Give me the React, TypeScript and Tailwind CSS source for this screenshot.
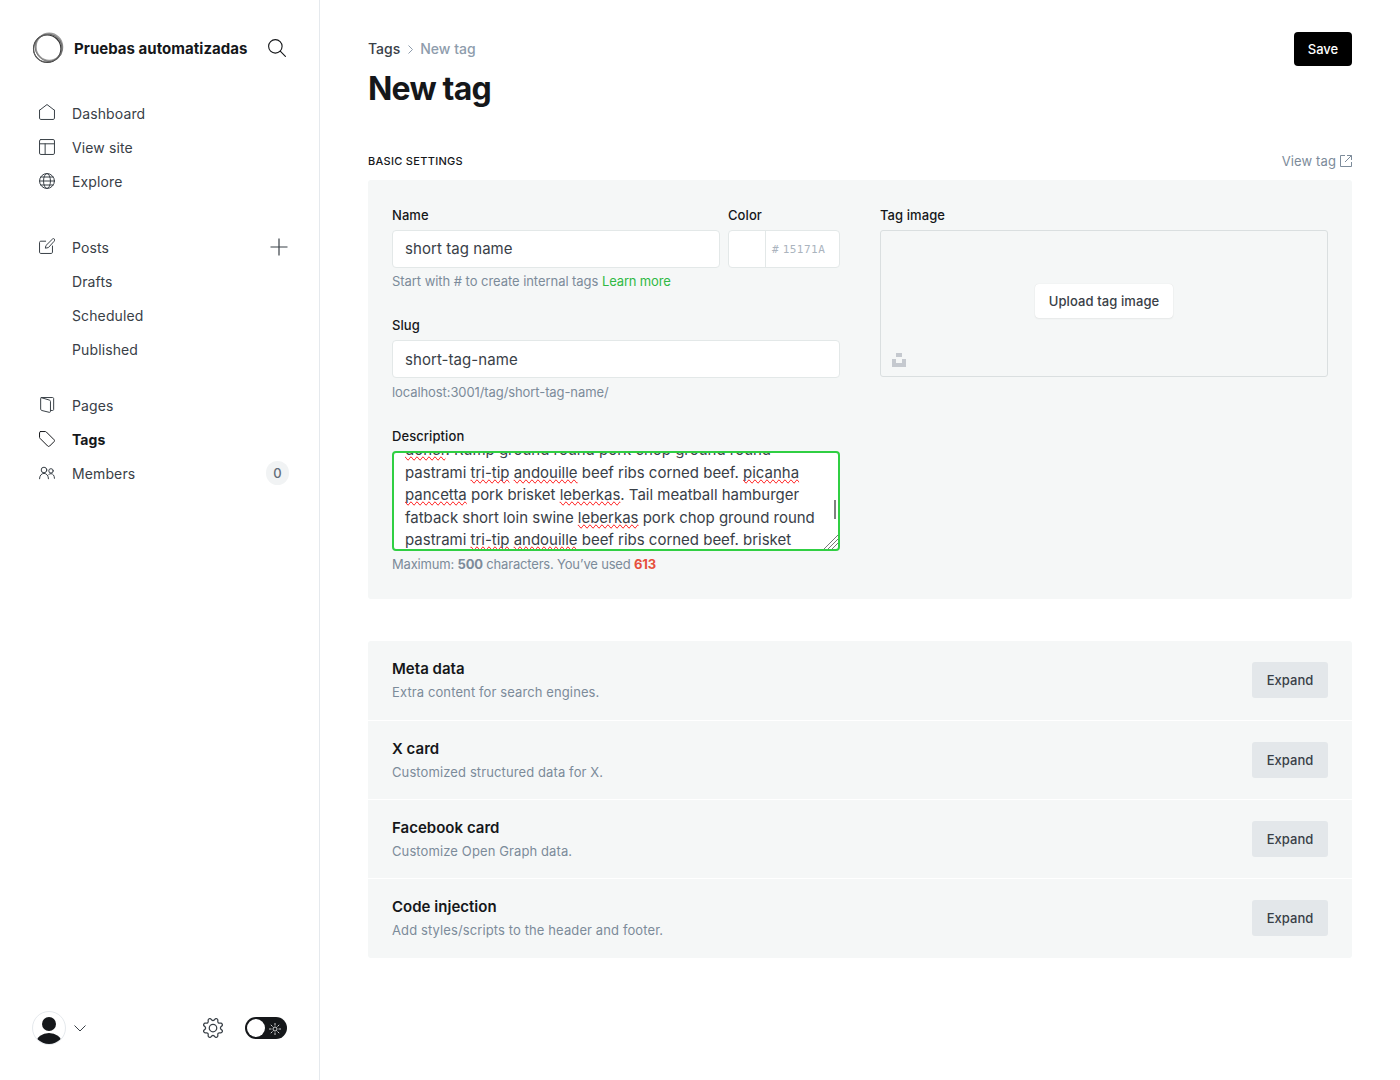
import type { ReactNode } from 'react';

type IconProps = { children: ReactNode; className?: string };

function Icon({ children, className = '' }: IconProps) {
  return (
    <svg
      viewBox="0 0 24 24"
      fill="none"
      stroke="currentColor"
      strokeWidth="1.5"
      strokeLinecap="round"
      strokeLinejoin="round"
      className={`block shrink-0 ${className}`}
    >
      {children}
    </svg>
  );
}

const icons = {
  home: <path d="M.8 9.4v11.9c0 1.1.8 1.9 1.9 1.9h18.6c1.1 0 1.9-.8 1.9-1.9V9.4M.8 9.4 12 .8l11.2 8.6" />,
  site: (
    <>
      <rect x=".8" y=".8" width="22.4" height="22.4" rx="2" />
      <path d="M.8 7.2h22.4M9.2 7.2v16" />
    </>
  ),
  globe: (
    <>
      <circle cx="12" cy="12" r="11.2" />
      <ellipse cx="12" cy="12" rx="5.2" ry="11.2" />
      <path d="M.8 12h22.4M2.8 6h18.4M2.8 18h18.4" />
    </>
  ),
  posts: (
    <>
      <path d="M20.2 12v9.4c0 1-.8 1.8-1.8 1.8H2.6c-1 0-1.8-.8-1.8-1.8V6.6c0-1 .8-1.8 1.8-1.8H10" />
      <path d="m13.500 14.500-4 .8.9-4L20.200 1.600a2 2 0 0 1 2.900 2.900z" />
    </>
  ),
  pages: (
    <>
      <path d="M4 .8h16.500c.8 0 1.500.7 1.500 1.500v16.400c0 .8-.7 1.500-1.500 1.500h-3" />
      <path d="M3.200.9 15.500 4.600c1 .3 1.700 1 1.700 2v15c0 1-.8 1.600-1.700 1.400L4 20.200c-.9-.3-1.500-1-1.500-2V2C2.500 1.300 3 .8 4 .8" />
    </>
  ),
  tag: <path d="M2.300.8h7.200c.5 0 1 .2 1.400.6l11.700 11.700c.8.8.8 2 0 2.800l-6.700 6.700c-.8.8-2 .8-2.800 0L1.400 10.900c-.4-.4-.6-.9-.6-1.400V2.300C.8 1.500 1.500.8 2.300.8z" />,
  members: (
    <>
      <circle cx="7.500" cy="7.500" r="4.200" />
      <path d="M.8 20.600c0-4.500 2.800-8 6.700-8s6.700 3.500 6.700 8" />
      <circle cx="18" cy="8.800" r="3.300" />
      <path d="M14.600 14.300c1-.9 2.100-1.300 3.400-1.300 3 0 5.200 2.900 5.200 7" />
    </>
  ),
};

type NavProps = { label: string; icon?: ReactNode; active?: boolean; raised?: boolean; trailing?: ReactNode };

function NavItem({ label, icon, active, raised, trailing }: NavProps) {
  return (
    <a
      className={`flex h-[34px] items-center pr-[30px] pl-[39px] text-[14px] ${
        active ? 'font-bold tracking-[0.05px] text-[#15171a]' : 'tracking-[0.12px] text-[#394047]'
      }`}
    >
      <span className={`mr-[17px] h-4 w-4 ${raised ? '-mt-1' : '-mt-[2px]'}`}>
        {icon && <Icon className="size-4">{icon}</Icon>}
      </span>
      <span className="flex-1 pb-px">{label}</span>
      {trailing}
    </a>
  );
}

function Sidebar() {
  return (
    <aside className="flex w-80 shrink-0 flex-col border-r border-[#e5e9ed]">
      <header className="mb-px flex h-24 items-center pl-8">
        <svg viewBox="0 0 32 32" fill="none" className="mr-[10px] size-8">
          <ellipse cx="17.200" cy="14.900" rx="13.300" ry="13.600" stroke="#9a9a9a" strokeWidth="1.600" />
          <ellipse cx="16.600" cy="15.800" rx="14.200" ry="13.100" stroke="#777" strokeWidth=".9" transform="rotate(50 16.600 15.800)" />
          <circle cx="15.200" cy="16.700" r="13.700" stroke="#333" strokeWidth="1.100" />
          <ellipse cx="15.800" cy="16.200" rx="14.600" ry="13.700" stroke="#666" strokeWidth=".8" transform="rotate(-35 15.800 16.200)" />
        </svg>
        <span className="w-[194px] pt-[2px] text-[15px] font-bold tracking-[0.03px] text-[#15171a]">Pruebas automatizadas</span>
        <Icon className="-mt-px size-[18px] text-[#15171a]">
          <circle cx="9.800" cy="9.800" r="9" />
          <path d="m16.300 16.300 6.900 6.900" />
        </Icon>
      </header>
      <nav className="flex flex-1 flex-col">
        <NavItem label="Dashboard" icon={icons.home} raised />
        <NavItem label="View site" icon={icons.site} />
        <NavItem label="Explore" icon={icons.globe} />
        <div className="h-8" />
        <NavItem
          label="Posts"
          icon={icons.posts}
          raised
          trailing={
            <svg viewBox="0 0 18 18" className="-mt-[2px] mr-px size-[18px] text-[#394047]" stroke="currentColor" strokeWidth="1.200">
              <path d="M9 .5v17M.5 9h17" />
            </svg>
          }
        />
        <NavItem label="Drafts" />
        <NavItem label="Scheduled" />
        <NavItem label="Published" />
        <div className="h-[22px]" />
        <NavItem label="Pages" icon={icons.pages} />
        <NavItem label="Tags" icon={icons.tag} active />
        <NavItem
          label="Members"
          icon={icons.members}
          trailing={
            <span className="-mt-[2px] flex h-6 w-[23px] items-center justify-center rounded-full bg-[#f1f3f4] pt-[2px] text-[13px] font-medium text-[#626d79]">
              0
            </span>
          }
        />
      </nav>
      <footer className="flex h-[104px] items-center pl-8">
        <span className="size-[34px] overflow-hidden rounded-full border border-[#e5e9ed]">
          <svg viewBox="0 0 32 32" className="size-8" fill="#15171a">
            <circle cx="16" cy="12" r="7" />
            <ellipse cx="16" cy="30" rx="12.500" ry="9" />
          </svg>
        </span>
        <svg viewBox="0 0 12 7" className="mr-[117px] ml-2 h-[7px] w-3" fill="none" stroke="#394047">
          <path d="m.5.5 5.500 5.500L11.500.5" />
        </svg>
        <Icon className="mr-[22px] size-5 text-[#394047]">
          <circle cx="12" cy="12" r="4.500" />
          <path d="M10.546 2.438a1.957 1.957 0 0 0 2.908 0L14.4 1.4a1.959 1.959 0 0 1 3.41 1.413l-.071 1.4a1.958 1.958 0 0 0 2.051 2.054l1.4-.071a1.959 1.959 0 0 1 1.41 3.41l-1.042.94a1.96 1.96 0 0 0 0 2.909l1.042.94a1.959 1.959 0 0 1-1.413 3.41l-1.4-.071a1.958 1.958 0 0 0-2.056 2.056l.071 1.4a1.959 1.959 0 0 1-3.41 1.41l-.94-1.041a1.958 1.958 0 0 0-2.908 0l-.946 1.042a1.959 1.959 0 0 1-3.41-1.413l.071-1.4a1.958 1.958 0 0 0-2.053-2.051l-1.4.071A1.96 1.96 0 0 1 1.4 14.4l1.042-.94a1.96 1.96 0 0 0 0-2.909L1.4 9.606A1.959 1.959 0 0 1 2.814 6.2l1.4.071a1.958 1.958 0 0 0 2.054-2.06L6.2 2.814A1.959 1.959 0 0 1 9.606 1.4Z" />
        </Icon>
        <span className="flex h-[22px] w-[42px] items-center rounded-full bg-[#15171a] pl-[2px]">
          <span className="mr-[4px] size-[18px] rounded-full bg-white" />
          <svg viewBox="0 0 12 12" className="mt-px size-3" fill="none" stroke="#fff" strokeWidth=".8">
            <circle cx="6" cy="6" r="2" />
            <path d="M6 0v2.500M6 9.500V12M0 6h2.500M9.500 6H12M1.800 1.800l1.700 1.700M8.500 8.500l1.700 1.700M10.200 1.800 8.500 3.500M3.500 8.500l-1.700 1.700" />
          </svg>
        </span>
      </footer>
    </aside>
  );
}

function Misspelt({ children }: { children: ReactNode }) {
  return <span className="[text-decoration-line:spelling-error]">{children}</span>;
}

function Label({ children }: { children: ReactNode }) {
  return (
    <label className="mb-[5px] block h-[20px] text-[13px] leading-5 font-medium tracking-[0.08px] text-[#15171a]">
      {children}
    </label>
  );
}

function Hint({ children, className = 'tracking-[-0.09px]' }: { children: ReactNode; className?: string }) {
  return <p className={`mt-1 h-5 text-[13px] leading-5 text-[#7c8b9a] ${className}`}>{children}</p>;
}

function BasicSettings() {
  return (
    <section className="flex h-[419px] justify-between rounded-[3px] bg-[#f5f7f7] px-6 pt-[25px]">
      <div className="w-[448px]">
        <div className="flex gap-2">
          <div className="w-[328px]">
            <Label>Name</Label>
            <div className="flex h-[38px] items-center rounded-[4px] border border-[#e3e8e8] bg-white px-3 text-[15px] tracking-[0.06px] text-[#394047]">
              short tag name
            </div>
          </div>
          <div className="w-28">
            <Label>Color</Label>
            <div className="flex h-[38px] items-center rounded-[4px] border border-[#e3e8e8] bg-white">
              <span className="h-full w-[37px] border-r border-[#e3e8e8]" />
              <span className="flex gap-1 pt-[2px] pl-[6px] font-['DejaVu_Sans_Mono',monospace] text-[11px] text-[#abb4be]">
                <span>#</span>
                <span className="tracking-[0.5px]">15171A</span>
              </span>
            </div>
          </div>
        </div>
        <Hint className="-translate-y-px tracking-[-0.05px]">
          Start with # to create internal tags <a className="tracking-[-0.15px] text-[#30b944]">Learn more</a>
        </Hint>
        <div className="mt-[23px]">
          <Label>Slug</Label>
          <div className="flex h-[38px] items-center rounded-[4px] border border-[#e3e8e8] bg-white px-3 pt-[2px] text-[15px] tracking-[0.06px] text-[#394047]">
            short-tag-name
          </div>
        </div>
        <Hint>localhost:3001/tag/short-tag-name/</Hint>
        <div className="mt-6">
          <Label>Description</Label>
          <div className="relative h-[100px] overflow-hidden rounded-[4px] border-2 border-[#30cf43] bg-white px-[11px]">
            <p className="-mt-[14px] text-[15px] leading-[22.5px] tracking-[-0.015px] whitespace-nowrap text-[#394047]">
              <Misspelt>doner</Misspelt>. Rump ground round pork chop ground round
              <br />
              pastrami <Misspelt>tri-tip</Misspelt> <Misspelt>andouille</Misspelt> beef ribs corned beef.{' '}
              <Misspelt>picanha</Misspelt>
              <br />
              <Misspelt>pancetta</Misspelt> pork brisket <Misspelt>leberkas</Misspelt>. Tail meatball hamburger
              <br />
              fatback short loin swine <Misspelt>leberkas</Misspelt> pork chop ground round
              <br />
              pastrami <Misspelt>tri-tip</Misspelt> <Misspelt>andouille</Misspelt> beef ribs corned beef. brisket
            </p>
            <span className="absolute top-[47px] right-[2px] h-[19px] w-[2px] bg-[#808080]" />
            <svg viewBox="0 0 15 15" className="absolute right-0 bottom-0 size-[15px]" stroke="#777" fill="none">
              <path d="M1 15 15 1M5 15 15 5M9 15l6-6" />
            </svg>
          </div>
        </div>
        <Hint className="-translate-y-px tracking-[-0.18px]">
          Maximum: <b className="font-bold">500</b> characters. You’ve used <b className="font-bold text-[#e6503c]">613</b>
        </Hint>
      </div>
      <div className="w-[448px]">
        <Label>Tag image</Label>
        <div className="relative flex h-[147px] items-center justify-center rounded-[3px] border border-[#dadfe0]">
          <button className="-mt-[5px] h-[34px] rounded-[4px] bg-white px-[14px] pt-px text-[13px] font-medium tracking-[0.1px] text-[#394047] shadow-[0_0_1px_rgba(0,0,0,0.12),0_1px_2px_rgba(0,0,0,0.05)]">
            Upload tag image
          </button>
          <svg viewBox="0 0 14 14" className="absolute bottom-[9px] left-[11px] size-[14px]" fill="#c5c9cf">
            <path d="M4 0h6v4H4zM0 6h4v4h6V6h4v8H0z" />
          </svg>
        </div>
      </div>
    </section>
  );
}

const panels = [
  { title: 'Meta data', text: 'Extra content for search engines.' },
  { title: 'X card', text: 'Customized structured data for X.' },
  { title: 'Facebook card', text: 'Customize Open Graph data.' },
  { title: 'Code injection', text: 'Add styles/scripts to the header and footer.' },
];

export default function App() {
  return (
    <div className="flex h-[1080px] w-[1400px] overflow-hidden bg-white font-['Inter',sans-serif]">
      <Sidebar />
      <main className="flex-1 px-12 pt-8">
        <header className="flex items-start justify-between">
          <div>
            <div className="flex h-[34px] items-center text-sm font-medium text-[#394047]">
              Tags
              <svg viewBox="0 0 5 9" className="mr-[7px] ml-2 h-[9px] w-[5px]" fill="none" stroke="#8e9cac">
                <path d="m.5.5 4 4-4 4" />
              </svg>
              <span className="text-[#8e9cac]">New tag</span>
            </div>
            <h1 className="h-[46px] text-[32px] leading-[45px] font-bold tracking-[-0.8px] text-[#15171a]">New tag</h1>
          </div>
          <button className="h-[34px] w-[58px] rounded-[4px] bg-black pt-px text-[13px] font-medium text-white">Save</button>
        </header>
        <div className="mt-[39px] flex h-5 items-center justify-between">
          <h4 className="text-[11px] font-medium tracking-[0.3px] text-[#15171a] uppercase">Basic settings</h4>
          <a className="flex items-center pt-px text-[13px] tracking-[0.12px] text-[#7c8b9a]">
            View tag
            <svg viewBox="0 0 12 12" className="-mt-px ml-1 size-3" fill="none" stroke="currentColor">
              <path d="M5 .5H.5v11h11V7M7 .5h4.500V5M11.500.5 5 7" />
            </svg>
          </a>
        </div>
        <div className="mt-[9px]">
          <BasicSettings />
        </div>
        <section className="mt-[42px] overflow-hidden rounded-[3px] bg-[#f5f7f7]">
          {panels.map((p) => (
            <div
              key={p.title}
              className="flex h-[79px] items-start justify-between border-b border-white px-6 first:h-20 last:border-b-0"
            >
              <div className="pt-4">
                <h4 className="text-[15px] leading-6 font-semibold tracking-[0.02px] text-[#15171a]">{p.title}</h4>
                <p className="text-[13px] leading-[23px] tracking-[0.11px] text-[#7c8b9a]">{p.text}</p>
              </div>
              <button className="mt-[21px] h-9 w-[76px] rounded-[3px] bg-[#e3e7ea] pt-px text-[13px] font-medium text-[#394047]">
                Expand
              </button>
            </div>
          ))}
        </section>
      </main>
    </div>
  );
}
